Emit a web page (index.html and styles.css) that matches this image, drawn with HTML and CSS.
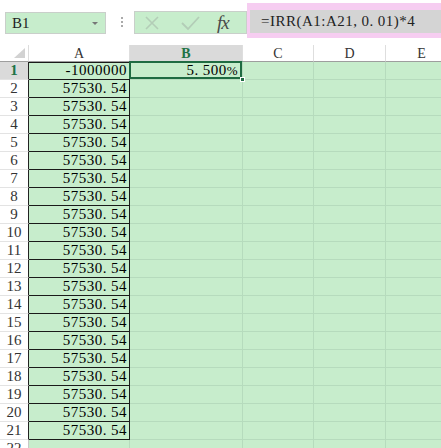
FILE: index.html
```html
<!DOCTYPE html>
<html>
<head>
<meta charset="utf-8">
<link rel="stylesheet" href="styles.css">
</head>
<body>
<div class="toolbar">
  <div class="namebox"><span>B1</span><span class="caret"></span></div>
  <div class="dots"></div>
  <div class="fbtns">
    <svg class="ic" width="16" height="16" viewBox="0 0 16 16"><path d="M2 2 L14 14 M14 2 L2 14" stroke="#b3cdb7" stroke-width="1.6" fill="none"/></svg>
    <svg class="ic" width="20" height="16" viewBox="0 0 20 16"><path d="M2 8 L8 14 L19 2" stroke="#b3cdb7" stroke-width="1.8" fill="none"/></svg>
    <span class="fx">fx</span>
  </div>
  <div class="formula"><div class="formula-in">=IRR(A1:A21<span class="pt">,</span>0<span class="pt">.</span>01)*4</div></div>
</div>
<div class="sheet">
  <div class="corner"><svg width="13" height="11" viewBox="0 0 13 11"><path d="M12 0 L12 10 L1 10 Z" fill="#d2d2d2"/></svg></div>
  <div class="ch">A</div><div class="ch sel">B</div><div class="ch">C</div><div class="ch">D</div><div class="ch">E</div>

  <div class="rh b sel">1</div><div class="c a top">-1000000</div><div class="c b1">5<span class="pt">.</span>500<span class="pc">%</span></div><div class="c"></div><div class="c"></div><div class="c"></div>
  <div class="rh b">2</div><div class="c a">57530<span class="pt">.</span>54</div><div class="c"></div><div class="c"></div><div class="c"></div><div class="c"></div>
  <div class="rh b">3</div><div class="c a">57530<span class="pt">.</span>54</div><div class="c"></div><div class="c"></div><div class="c"></div><div class="c"></div>
  <div class="rh b">4</div><div class="c a">57530<span class="pt">.</span>54</div><div class="c"></div><div class="c"></div><div class="c"></div><div class="c"></div>
  <div class="rh b">5</div><div class="c a">57530<span class="pt">.</span>54</div><div class="c"></div><div class="c"></div><div class="c"></div><div class="c"></div>
  <div class="rh b">6</div><div class="c a">57530<span class="pt">.</span>54</div><div class="c"></div><div class="c"></div><div class="c"></div><div class="c"></div>
  <div class="rh b">7</div><div class="c a">57530<span class="pt">.</span>54</div><div class="c"></div><div class="c"></div><div class="c"></div><div class="c"></div>
  <div class="rh b">8</div><div class="c a">57530<span class="pt">.</span>54</div><div class="c"></div><div class="c"></div><div class="c"></div><div class="c"></div>
  <div class="rh b">9</div><div class="c a">57530<span class="pt">.</span>54</div><div class="c"></div><div class="c"></div><div class="c"></div><div class="c"></div>
  <div class="rh b">10</div><div class="c a">57530<span class="pt">.</span>54</div><div class="c"></div><div class="c"></div><div class="c"></div><div class="c"></div>
  <div class="rh b">11</div><div class="c a">57530<span class="pt">.</span>54</div><div class="c"></div><div class="c"></div><div class="c"></div><div class="c"></div>
  <div class="rh b">12</div><div class="c a">57530<span class="pt">.</span>54</div><div class="c"></div><div class="c"></div><div class="c"></div><div class="c"></div>
  <div class="rh b">13</div><div class="c a">57530<span class="pt">.</span>54</div><div class="c"></div><div class="c"></div><div class="c"></div><div class="c"></div>
  <div class="rh b">14</div><div class="c a">57530<span class="pt">.</span>54</div><div class="c"></div><div class="c"></div><div class="c"></div><div class="c"></div>
  <div class="rh b">15</div><div class="c a">57530<span class="pt">.</span>54</div><div class="c"></div><div class="c"></div><div class="c"></div><div class="c"></div>
  <div class="rh b">16</div><div class="c a">57530<span class="pt">.</span>54</div><div class="c"></div><div class="c"></div><div class="c"></div><div class="c"></div>
  <div class="rh b">17</div><div class="c a">57530<span class="pt">.</span>54</div><div class="c"></div><div class="c"></div><div class="c"></div><div class="c"></div>
  <div class="rh b">18</div><div class="c a">57530<span class="pt">.</span>54</div><div class="c"></div><div class="c"></div><div class="c"></div><div class="c"></div>
  <div class="rh b">19</div><div class="c a">57530<span class="pt">.</span>54</div><div class="c"></div><div class="c"></div><div class="c"></div><div class="c"></div>
  <div class="rh b">20</div><div class="c a">57530<span class="pt">.</span>54</div><div class="c"></div><div class="c"></div><div class="c"></div><div class="c"></div>
  <div class="rh b">21</div><div class="c a">57530<span class="pt">.</span>54</div><div class="c"></div><div class="c"></div><div class="c"></div><div class="c"></div>
  <div class="rh">22</div><div class="c"></div><div class="c"></div><div class="c"></div><div class="c"></div><div class="c"></div>
</div>
</body>
</html>
```
FILE: styles.css
```css
html, body {
  margin: 0;
  padding: 0;
}
body {
  width: 441px;
  height: 448px;
  overflow: hidden;
  background: #fff;
  font-family: "Liberation Serif", "Times New Roman", serif;
  color: #000;
}
.toolbar {
  height: 45px;
  display: flex;
  align-items: flex-start;
}
.namebox {
  margin: 12px 0 0 5px;
  width: 101px;
  height: 22px;
  box-sizing: border-box;
  border: 1px solid #c9cfca;
  background: #c7edcc;
  display: flex;
  align-items: center;
  justify-content: space-between;
  padding: 0 7px 0 6px;
  font: 15px "Liberation Serif", serif;
  color: #222;
}
.caret {
  width: 0;
  height: 0;
  border-left: 3px solid transparent;
  border-right: 3px solid transparent;
  border-top: 3px solid #777;
}
.dots {
  margin: 17px 0 0 15px;
  width: 2px;
  height: 2px;
  background: #aaa;
  box-shadow: 0 4px 0 #aaa, 0 8px 0 #aaa;
}
.fbtns {
  margin: 11px 0 0 11px;
  width: 113px;
  height: 23px;
  box-sizing: border-box;
  border: 1px solid #c9cfca;
  background: #c7edcc;
  display: flex;
  align-items: center;
  padding-left: 9px;
}
.ic {
  margin-right: 20px;
}
.ic + .ic {
  margin-right: 17px;
}
.fx {
  font: italic 19px "Liberation Serif", serif;
  color: #4a4a4a;
  letter-spacing: -1px;
  line-height: 20px;
}
.formula {
  margin-top: 3px;
  flex: 1;
  height: 35px;
  box-sizing: border-box;
  background: #f6cdf1;
  padding: 7px 0 5px 3px;
}
.formula-in {
  height: 100%;
  background: #d4d4d4;
  display: flex;
  align-items: center;
  padding-left: 11px;
  font-size: 15px;
  letter-spacing: 0.5px;
  color: #222;
  white-space: pre;
}
.pt {
  margin-right: 4px;
}
.pc {
  font-size: 13px;
}
.sheet {
  display: grid;
  grid-template-columns: 29px 101px 113px 71px 72px 72px;
  grid-template-rows: 17px;
  grid-auto-rows: 18px;
}
.sheet > div {
  box-sizing: border-box;
}
.corner {
  background: #fff;
  border-right: 1px solid #dcdcdc;
  border-bottom: 1px solid #9e9e9e;
  display: flex;
  align-items: flex-end;
  justify-content: flex-end;
  padding: 0 2px 2px 0;
}
.corner svg {
  display: block;
}
.ch {
  background: #fff;
  border-right: 1px solid #dedede;
  border-bottom: 1px solid #9e9e9e;
  text-align: center;
  font-size: 14px;
  line-height: 17px;
  color: #333;
}
.ch.sel {
  background: #dadada;
  color: #217346;
  font-weight: bold;
  border-bottom: 1px solid #217346;
}
.rh {
  background: #fff;
  border-right: 1px solid #c8c8c8;
  border-bottom: 1px solid #e3e3e3;
  text-align: center;
  font-size: 15px;
  line-height: 17px;
  color: #333;
}
.rh.b {
  border-right-color: #222;
}
.rh.sel {
  background: #dadada;
  color: #217346;
  font-weight: bold;
}
.c {
  background: #c7edcc;
  border-right: 1px solid #b6dbbd;
  border-bottom: 1px solid #b6dbbd;
  font-size: 15px;
  letter-spacing: 0.5px;
  line-height: 17px;
  white-space: nowrap;
  overflow: hidden;
}
.c.a {
  border-right-color: #1a1a1a;
  border-bottom-color: #1a1a1a;
  text-align: right;
  padding-right: 2px;
  color: #000;
}
.c.top {
  box-shadow: inset 0 1px 0 #1a1a1a;
}
.b1 {
  position: relative;
  overflow: visible;
  text-align: right;
  padding-right: 4px;
  color: #000;
}
.b1::before {
  content: "";
  position: absolute;
  left: -1px;
  top: -1px;
  right: 0;
  bottom: 0;
  border: 2px solid #1f6b42;
}
.b1::after {
  content: "";
  position: absolute;
  right: -3px;
  bottom: -3px;
  width: 5px;
  height: 5px;
  background: #1f6b42;
  border: 1px solid #fff;
  box-sizing: border-box;
}
```
